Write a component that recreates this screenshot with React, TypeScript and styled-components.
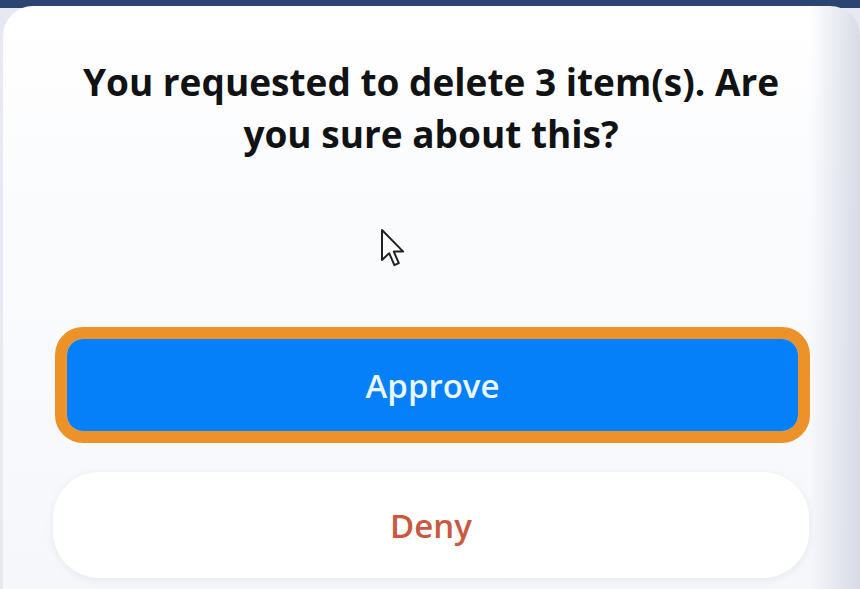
import React from "react";
import styled, { createGlobalStyle } from "styled-components";

const GlobalStyle = createGlobalStyle`
  html, body {
    margin: 0;
    padding: 0;
    width: 860px;
    height: 589px;
    overflow: hidden;
    background: #e6e9f1;
  }
  body {
    font-family: "Open Sans", "Noto Sans", Arial, sans-serif;
  }
`;

const Screen = styled.div`
  position: relative;
  width: 860px;
  height: 589px;
  background: linear-gradient(180deg, #2b4472 0px, #2b4472 8px, #e6e9f1 8px);
  padding: 6px 0 0 3px;
  box-sizing: border-box;
`;

const Sheet = styled.div`
  height: 100%;
  border-radius: 30px 30px 0 0;
  background:
    linear-gradient(90deg, rgba(255, 255, 255, 0) 94%, rgba(212, 215, 226, 0.9) 100%),
    linear-gradient(180deg, #ffffff 0%, #fafbfd 40%, #f6f7fb 100%);
  padding: 50px 51px 0 50px;
  box-sizing: border-box;
  display: flex;
  flex-direction: column;
  align-items: stretch;
`;

const Question = styled.h2`
  margin: 0;
  font-size: 37px;
  font-weight: 700;
  line-height: 52px;
  color: #111214;
  text-align: center;
`;

const Actions = styled.div`
  margin-top: 167px;
  display: flex;
  flex-direction: column;
  gap: 29px;
`;

const FocusRing = styled.div`
  border: 12px solid #ec9229;
  border-radius: 28px;
  margin: 0 -1px 0 2px;
`;

const ActionButton = styled.button<{ $variant: "primary" | "secondary" }>`
  display: flex;
  align-items: center;
  justify-content: center;
  width: 100%;
  border: none;
  font-family: "Open Sans", "Noto Sans", Arial, sans-serif;
  font-weight: 600;
  font-size: 33px;
  cursor: pointer;
  ${({ $variant }) =>
    $variant === "primary"
      ? `
    height: 92px;
    border-radius: 16px;
    background: #0680f8;
    color: #eaf6ff;
  `
      : `
    height: 106px;
    border-radius: 46px;
    background: #ffffff;
    color: #c9583f;
    box-shadow: 0 2px 8px rgba(30, 40, 80, 0.07);
  `}
`;

const Pointer = styled.svg`
  position: absolute;
  left: 380px;
  top: 228px;
  width: 26px;
  height: 40px;
`;

export default function App() {
  return (
    <>
      <GlobalStyle />
      <Screen>
        <Sheet>
          <Question>
            You requested to delete 3 item(s). Are
            <br />
            you sure about this?
          </Question>
          <Actions>
            <FocusRing>
              <ActionButton $variant="primary">Approve</ActionButton>
            </FocusRing>
            <ActionButton $variant="secondary">Deny</ActionButton>
          </Actions>
        </Sheet>
        <Pointer viewBox="0 0 13 20">
          <path
            d="M1 1 L1 16 L4.6 12.6 L7.2 18.6 L9.4 17.6 L6.9 11.8 L11.6 11.8 Z"
            fill="#ffffff"
            stroke="#222"
            strokeWidth="1"
            strokeLinejoin="round"
          />
        </Pointer>
      </Screen>
    </>
  );
}
